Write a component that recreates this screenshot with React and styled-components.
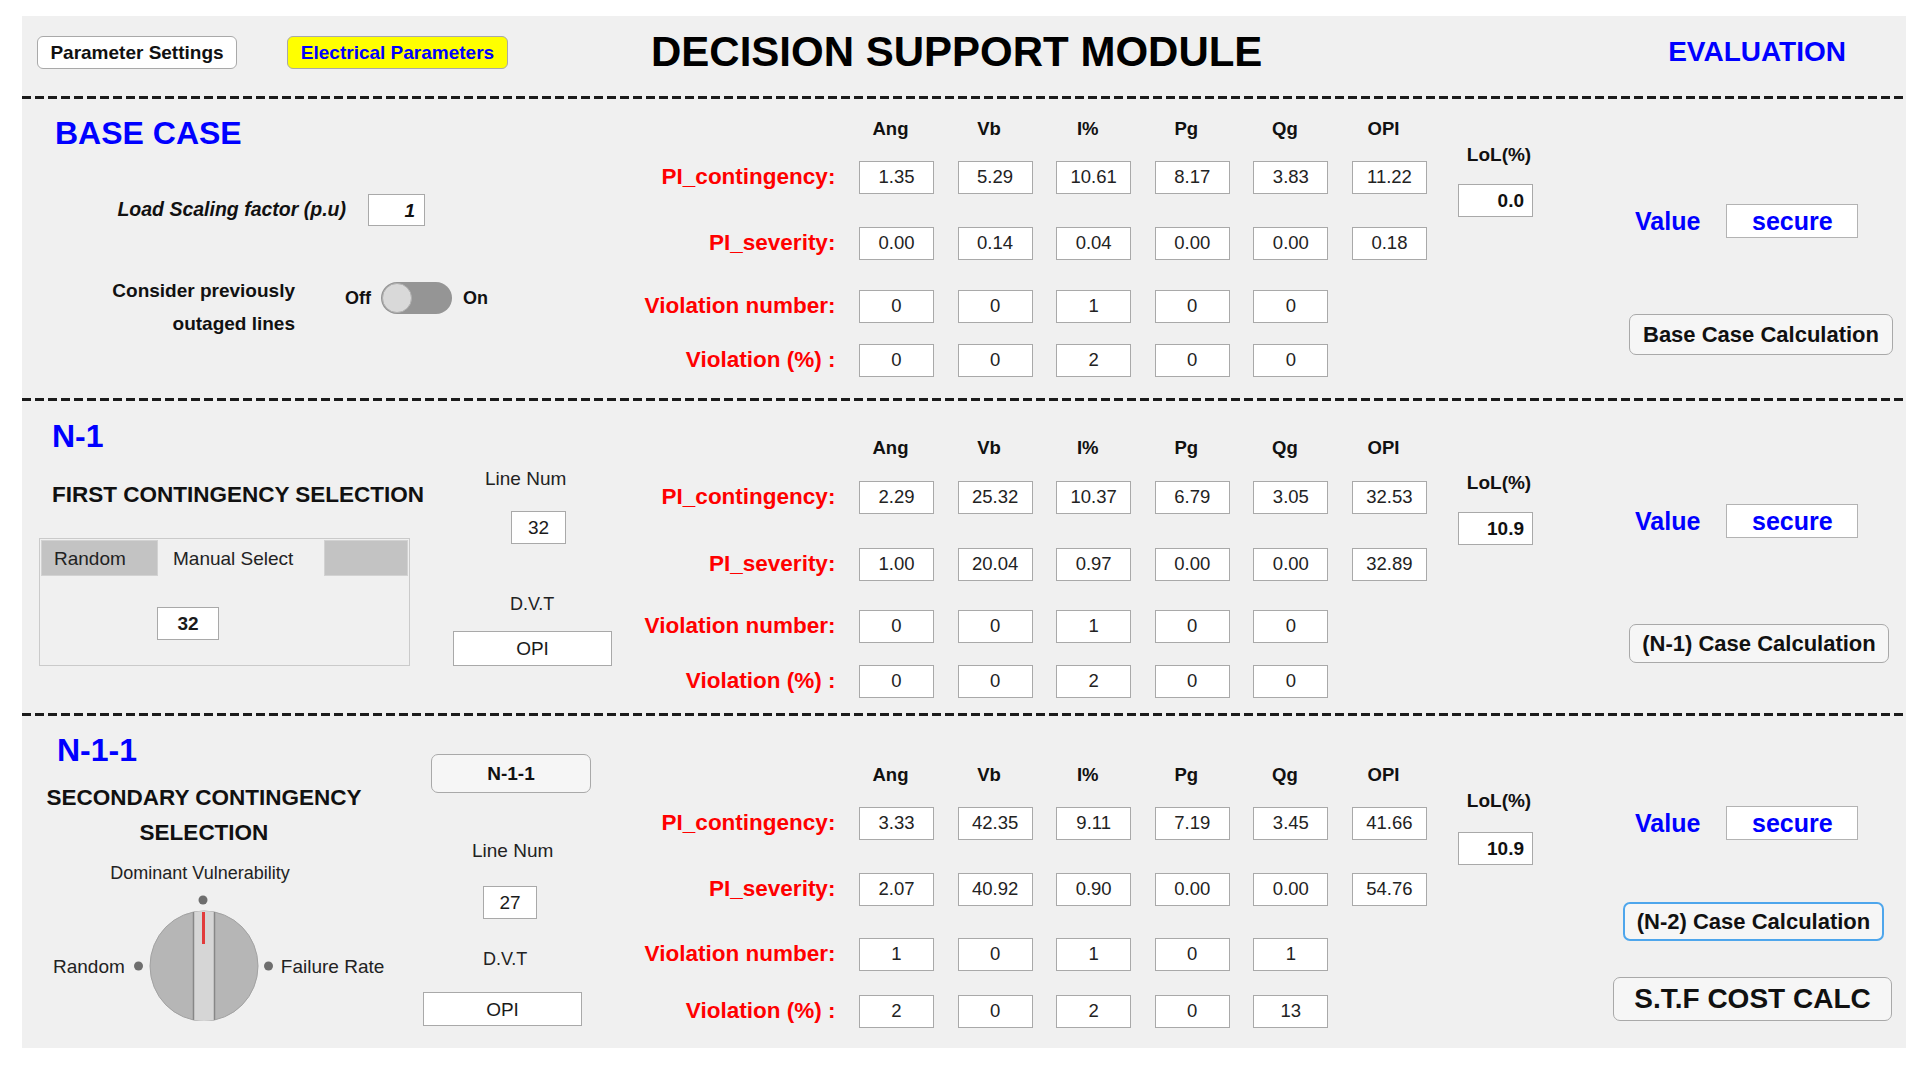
import React from "react";
import styled, { createGlobalStyle } from "styled-components";

const FONT = `"Liberation Sans", Arial, Helvetica, sans-serif`;

const GlobalStyle = createGlobalStyle`
  html, body { margin: 0; padding: 0; background: #ffffff; }
  body { font-family: ${FONT}; color: #111; }
  * { box-sizing: border-box; }
`;

const Page = styled.div`
  padding: 16px 20px 21px 22px;
`;

const Panel = styled.main`
  width: 1884px;
  height: 1032px;
  background: #f0f0f0;
  display: flex;
  flex-direction: column;
`;

const Header = styled.header`
  height: 80px;
  flex: none;
  display: flex;
  align-items: center;
  padding-bottom: 8px;
`;

const TopButton = styled.button`
  height: 33px;
  width: ${(p) => p.$w}px;
  margin-left: ${(p) => p.$ml}px;
  border: 1px solid #a9a9a9;
  border-radius: 6px;
  background: ${(p) => p.$bg};
  color: ${(p) => p.$color};
  font: bold 19px/1 ${FONT};
  padding: 0;
`;

const Title = styled.h1`
  margin: 0 0 0 143px;
  font: bold 42px/1 ${FONT};
  color: #000;
  white-space: nowrap;
`;

const EvalTitle = styled.div`
  margin-left: auto;
  margin-right: 60px;
  font: bold 28px/1 ${FONT};
  color: #0000ff;
`;

const Dash = styled.div`
  height: 3px;
  flex: none;
  background: repeating-linear-gradient(90deg, #1b1b1b 0 9px, transparent 9px 13px);
`;

const Section = styled.section`
  height: ${(p) => p.$h}px;
  flex: none;
  display: grid;
  grid-template-columns: 608px 797px 186px 1fr;
`;

const Column = styled.div`
  padding-top: ${(p) => p.$pt || 0}px;
  display: flex;
  flex-direction: column;
  align-items: flex-start;
`;

const LeftGrid = styled.div`
  display: grid;
  grid-template-columns: ${(p) => p.$cols};
`;

const SectionTitle = styled.div`
  margin-left: ${(p) => p.$ml}px;
  font: bold 32px/36px ${FONT};
  color: #0000ff;
  white-space: nowrap;
`;

/* ---------- base case left ---------- */
const LoadRow = styled.div`
  margin-top: 43px;
  margin-left: 84px;
  height: 32px;
  display: flex;
  align-items: center;
  gap: 22px;
`;

const LoadLabel = styled.div`
  width: 240px;
  text-align: right;
  font: italic bold 19.5px/1 ${FONT};
  color: #111;
  white-space: nowrap;
`;

const LoadInput = styled.div`
  width: 57px;
  height: 32px;
  background: #fff;
  border: 1px solid #a9a9a9;
  display: flex;
  align-items: center;
  justify-content: flex-end;
  padding-right: 9px;
  font: italic bold 19px/1 ${FONT};
`;

const ConsiderRow = styled.div`
  margin-top: 48px;
  margin-left: 73px;
  display: flex;
  align-items: flex-start;
`;

const ConsiderText = styled.div`
  width: 200px;
  text-align: right;
  font: bold 19px/33px ${FONT};
  color: #111;
`;

const ToggleGroup = styled.div`
  margin-top: 8px;
  margin-left: 50px;
  display: flex;
  align-items: center;
  font: bold 18px/1 ${FONT};
  color: #111;
`;

const Track = styled.div`
  width: 71px;
  height: 32px;
  margin: 0 11px 0 10px;
  border-radius: 16px;
  background: #959595;
  padding: 1px;
  display: flex;
  align-items: center;
`;

const Thumb = styled.div`
  width: 30px;
  height: 30px;
  border-radius: 50%;
  background: #d9d9d9;
  border: 1px solid #b0b0b0;
`;

/* ---------- labels & boxes ---------- */
const SubHeading = styled.div`
  margin-top: ${(p) => p.$mt || 0}px;
  margin-left: ${(p) => p.$ml || 0}px;
  width: ${(p) => (p.$w ? `${p.$w}px` : "auto")};
  text-align: ${(p) => (p.$center ? "center" : "left")};
  font: bold 22.5px/${(p) => p.$lh || 26}px ${FONT};
  color: #111;
  white-space: nowrap;
`;

const SmallLabel = styled.div`
  margin-top: ${(p) => p.$mt || 0}px;
  margin-left: ${(p) => p.$ml || 0}px;
  width: ${(p) => (p.$w ? `${p.$w}px` : "auto")};
  text-align: ${(p) => (p.$center ? "center" : "left")};
  font: ${(p) => p.$fs || 19}px/24px ${FONT};
  color: #222;
  white-space: nowrap;
`;

const NumBox = styled.div`
  margin-top: ${(p) => p.$mt || 0}px;
  margin-left: ${(p) => p.$ml || 0}px;
  width: ${(p) => p.$w}px;
  height: ${(p) => p.$h || 33}px;
  background: #fff;
  border: 1px solid #a9a9a9;
  display: flex;
  align-items: center;
  justify-content: center;
  font: ${(p) => (p.$bold ? "bold " : "")}19px/1 ${FONT};
  color: #1a1a1a;
`;

/* ---------- tab panel ---------- */
const TabPanel = styled.div`
  margin-top: 30px;
  margin-left: 17px;
  width: 371px;
  height: 128px;
  border: 1px solid #cacaca;
  display: flex;
  flex-direction: column;
  padding: 1px;
`;

const TabBar = styled.div`
  height: 36px;
  display: flex;
`;

const Tab = styled.div`
  width: ${(p) => (p.$w ? `${p.$w}px` : "auto")};
  flex: ${(p) => (p.$w ? "none" : 1)};
  background: ${(p) => (p.$active ? "#f0f0f0" : "#c3c3c3")};
  border: 1px solid ${(p) => (p.$active ? "transparent" : "#d2d2d2")};
  display: flex;
  align-items: center;
  padding-left: ${(p) => p.$pl || 0}px;
  font: 19px/1 ${FONT};
  color: #222;
`;

/* ---------- knob ---------- */
const KnobRow = styled.div`
  margin-top: 10px;
  margin-left: 31px;
  display: flex;
  align-items: center;
`;

const KnobLabel = styled.span`
  padding-top: 16px;
  font: 19px/1 ${FONT};
  color: #222;
  white-space: nowrap;
  margin: ${(p) => p.$m};
`;

/* ---------- results table ---------- */
const TRow = styled.div`
  display: grid;
  grid-template-columns: 205.4px repeat(6, 75px);
  column-gap: 23.6px;
  align-items: center;
  height: ${(p) => p.$h}px;
  margin-top: ${(p) => p.$mt || 0}px;
`;

const ColHead = styled.div`
  text-align: center;
  padding-right: 12px;
  font: bold 18.5px/24px ${FONT};
  color: #111;
`;

const RowLabel = styled.div`
  text-align: right;
  font: bold 22.5px/1 ${FONT};
  color: #ff0000;
  white-space: nowrap;
`;

const Cell = styled.div`
  height: 33px;
  background: #fff;
  border: 1px solid #a9a9a9;
  display: flex;
  align-items: center;
  justify-content: center;
  font: 18.5px/1 ${FONT};
  color: #222;
`;

/* ---------- LoL ---------- */
const LolCol = styled.div`
  padding-top: ${(p) => p.$pt}px;
  padding-left: 31px;
  display: flex;
  flex-direction: column;
`;

const LolLabel = styled.div`
  width: 75px;
  padding-left: 7px;
  text-align: center;
  font: bold 19px/24px ${FONT};
  color: #111;
  white-space: nowrap;
`;

const LolBox = styled.div`
  margin-top: ${(p) => p.$mt}px;
  width: 75px;
  height: 33px;
  background: #fff;
  border: 1px solid #a9a9a9;
  display: flex;
  align-items: center;
  justify-content: flex-end;
  padding-right: 8px;
  font: bold 19px/1 ${FONT};
  color: #111;
`;

/* ---------- evaluation ---------- */
const ValueRow = styled.div`
  margin-left: 22px;
  height: 34px;
  display: flex;
  align-items: center;
  gap: 26px;
`;

const ValueLabel = styled.span`
  font: bold 25px/1 ${FONT};
  color: #0000ff;
`;

const SecureBox = styled.div`
  width: 132px;
  height: 34px;
  background: #fff;
  border: 1px solid #b3b3b3;
  display: flex;
  align-items: center;
  justify-content: center;
  font: bold 25px/1 ${FONT};
  color: #0000ff;
`;

const CalcButton = styled.button`
  margin-top: ${(p) => p.$mt || 0}px;
  margin-left: ${(p) => p.$ml || 0}px;
  width: ${(p) => p.$w}px;
  height: ${(p) => p.$h}px;
  padding: 0;
  border: ${(p) => (p.$focus ? "2px solid #4ea6ec" : "1px solid #a9a9a9")};
  border-radius: 7px;
  background: #f6f6f6;
  font: bold ${(p) => p.$fs || 22}px/1 ${FONT};
  color: #111;
  white-space: nowrap;
`;

const COLS = ["Ang", "Vb", "I%", "Pg", "Qg", "OPI"];
const ROW_LABELS = ["PI_contingency:", "PI_severity:", "Violation number:", "Violation (%) :"];

function ResultTable({ pt, gaps, data }) {
  return (
    <Column $pt={pt} style={{ alignItems: "stretch" }}>
      <TRow $h={24}>
        <span />
        {COLS.map((c) => (
          <ColHead key={c}>{c}</ColHead>
        ))}
      </TRow>
      {data.map((row, i) => (
        <TRow key={i} $h={33} $mt={gaps[i]}>
          <RowLabel>{ROW_LABELS[i]}</RowLabel>
          {row.map((v, j) => (
            <Cell key={j}>{v}</Cell>
          ))}
        </TRow>
      ))}
    </Column>
  );
}

function Lol({ pt, gap, value }) {
  return (
    <LolCol $pt={pt}>
      <LolLabel>LoL(%)</LolLabel>
      <LolBox $mt={gap}>{value}</LolBox>
    </LolCol>
  );
}

function Knob() {
  return (
    <svg width="139" height="126" viewBox="0 0 139 126">
      <defs>
        <clipPath id="knobClip">
          <ellipse cx="70" cy="71" rx="54" ry="55" />
        </clipPath>
      </defs>
      <circle cx="69" cy="5" r="4.5" fill="#6e6e6e" />
      <circle cx="4.5" cy="71" r="4.5" fill="#6e6e6e" />
      <circle cx="134.5" cy="71" r="4.5" fill="#6e6e6e" />
      <ellipse cx="70" cy="71" rx="54" ry="55" fill="#b6b6b6" stroke="#a2a2a2" strokeWidth="1" />
      <g clipPath="url(#knobClip)">
        <rect x="59.5" y="10" width="21" height="122" fill="#d6d6d6" />
        <line x1="59.5" y1="10" x2="59.5" y2="132" stroke="#878787" strokeWidth="1.5" />
        <line x1="80.5" y1="10" x2="80.5" y2="132" stroke="#878787" strokeWidth="1.5" />
      </g>
      <line x1="69.5" y1="17" x2="69.5" y2="49" stroke="#e23b3b" strokeWidth="3" />
    </svg>
  );
}

const BASE = [
  ["1.35", "5.29", "10.61", "8.17", "3.83", "11.22"],
  ["0.00", "0.14", "0.04", "0.00", "0.00", "0.18"],
  ["0", "0", "1", "0", "0"],
  ["0", "0", "2", "0", "0"],
];
const N1 = [
  ["2.29", "25.32", "10.37", "6.79", "3.05", "32.53"],
  ["1.00", "20.04", "0.97", "0.00", "0.00", "32.89"],
  ["0", "0", "1", "0", "0"],
  ["0", "0", "2", "0", "0"],
];
const N11 = [
  ["3.33", "42.35", "9.11", "7.19", "3.45", "41.66"],
  ["2.07", "40.92", "0.90", "0.00", "0.00", "54.76"],
  ["1", "0", "1", "0", "1"],
  ["2", "0", "2", "0", "13"],
];

export default function App() {
  return (
    <Page>
      <GlobalStyle />
      <Panel>
        <Header>
          <TopButton $w={200} $ml={15} $bg="#ffffff" $color="#111">
            Parameter Settings
          </TopButton>
          <TopButton $w={221} $ml={50} $bg="#ffff00" $color="#0000ff">
            Electrical Parameters
          </TopButton>
          <Title>DECISION SUPPORT MODULE</Title>
          <EvalTitle>EVALUATION</EvalTitle>
        </Header>
        <Dash />

        {/* BASE CASE */}
        <Section $h={299}>
          <Column $pt={16}>
            <SectionTitle $ml={33}>BASE CASE</SectionTitle>
            <LoadRow>
              <LoadLabel>Load Scaling factor (p.u)</LoadLabel>
              <LoadInput>1</LoadInput>
            </LoadRow>
            <ConsiderRow>
              <ConsiderText>
                Consider previously
                <br />
                outaged lines
              </ConsiderText>
              <ToggleGroup>
                <span>Off</span>
                <Track>
                  <Thumb />
                </Track>
                <span>On</span>
              </ToggleGroup>
            </ConsiderRow>
          </Column>
          <ResultTable pt={18} gaps={[20, 33, 30, 21]} data={BASE} />
          <Lol pt={44} gap={17} value="0.0" />
          <Column $pt={105}>
            <ValueRow>
              <ValueLabel>Value</ValueLabel>
              <SecureBox>secure</SecureBox>
            </ValueRow>
            <CalcButton $mt={76} $ml={16} $w={264} $h={41}>
              Base Case Calculation
            </CalcButton>
          </Column>
        </Section>
        <Dash />

        {/* N-1 */}
        <Section $h={312}>
          <LeftGrid $cols="408px 1fr">
            <Column $pt={17}>
              <SectionTitle $ml={30}>N-1</SectionTitle>
              <SubHeading $mt={28} $ml={30}>
                FIRST CONTINGENCY SELECTION
              </SubHeading>
              <TabPanel>
                <TabBar>
                  <Tab $w={117} $pl={12}>
                    Random
                  </Tab>
                  <Tab $w={166} $pl={14} $active>
                    Manual Select
                  </Tab>
                  <Tab />
                </TabBar>
                <NumBox $mt={31} $ml={116} $w={62} $bold>
                  32
                </NumBox>
              </TabPanel>
            </Column>
            <Column $pt={66}>
              <SmallLabel $ml={55}>Line Num</SmallLabel>
              <NumBox $mt={20} $ml={81} $w={55}>
                32
              </NumBox>
              <SmallLabel $mt={48} $ml={80} $fs={18}>
                D.V.T
              </SmallLabel>
              <NumBox $mt={15} $ml={23} $w={159} $h={35}>
                OPI
              </NumBox>
            </Column>
          </LeftGrid>
          <ResultTable pt={35} gaps={[21, 34, 29, 22]} data={N1} />
          <Lol pt={70} gap={17} value="10.9" />
          <Column $pt={103}>
            <ValueRow>
              <ValueLabel>Value</ValueLabel>
              <SecureBox>secure</SecureBox>
            </ValueRow>
            <CalcButton $mt={86} $ml={16} $w={260} $h={39}>
              (N-1) Case Calculation
            </CalcButton>
          </Column>
        </Section>
        <Dash />

        {/* N-1-1 */}
        <Section $h={332}>
          <LeftGrid $cols="398px 1fr">
            <Column $pt={16}>
              <SectionTitle $ml={35}>N-1-1</SectionTitle>
              <SubHeading $mt={12} $w={364} $lh={35} $center>
                SECONDARY CONTINGENCY
                <br />
                SELECTION
              </SubHeading>
              <SmallLabel $mt={11} $w={356} $fs={18} $center>
                Dominant Vulnerability
              </SmallLabel>
              <KnobRow>
                <KnobLabel $m="0 9px 0 0">Random</KnobLabel>
                <Knob />
                <KnobLabel $m="0 0 0 8px">Failure Rate</KnobLabel>
              </KnobRow>
            </Column>
            <Column $pt={38}>
              <CalcButton $ml={11} $w={160} $h={39} $fs={19}>
                N-1-1
              </CalcButton>
              <SmallLabel $mt={46} $ml={52}>
                Line Num
              </SmallLabel>
              <NumBox $mt={23} $ml={63} $w={54}>
                27
              </NumBox>
              <SmallLabel $mt={28} $ml={63} $fs={18}>
                D.V.T
              </SmallLabel>
              <NumBox $mt={21} $ml={3} $w={159} $h={34}>
                OPI
              </NumBox>
            </Column>
          </LeftGrid>
          <ResultTable pt={47} gaps={[20, 33, 32, 24]} data={N11} />
          <Lol pt={73} gap={19} value="10.9" />
          <Column $pt={90}>
            <ValueRow>
              <ValueLabel>Value</ValueLabel>
              <SecureBox>secure</SecureBox>
            </ValueRow>
            <CalcButton $mt={62} $ml={10} $w={261} $h={39} $focus>
              (N-2) Case Calculation
            </CalcButton>
            <CalcButton $mt={36} $ml={0} $w={279} $h={44} $fs={28}>
              S.T.F COST CALC
            </CalcButton>
          </Column>
        </Section>
      </Panel>
    </Page>
  );
}
